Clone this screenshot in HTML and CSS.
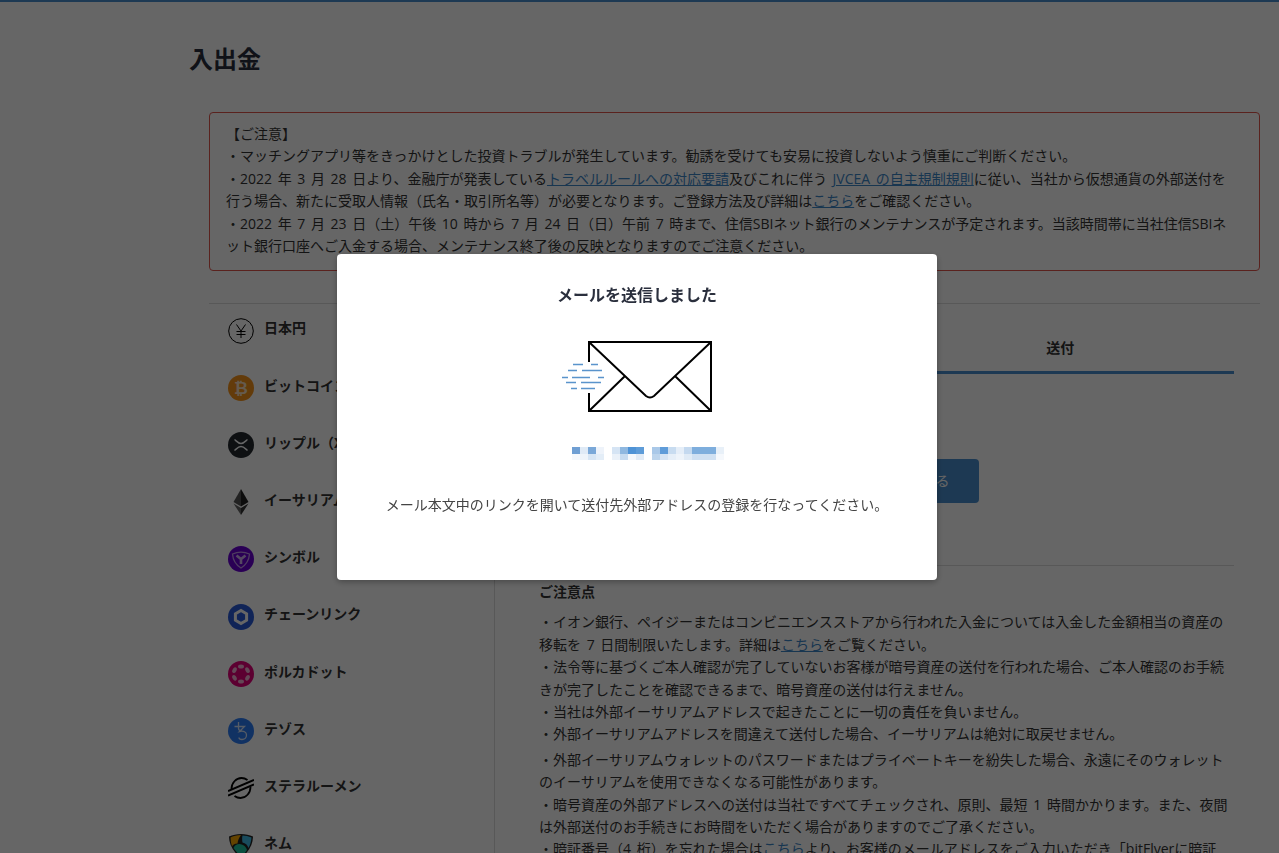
FILE: index.html
```html
<!DOCTYPE html>
<html lang="ja">
<head>
  <meta charset="utf-8">
  <title>入出金</title>
  <link rel="stylesheet" href="styles.css">
</head>
<body>
  <div class="topbar"></div>
  <main class="page">
    <h1 class="page-title">入出金</h1>

    <div class="notice">
      【ご注意】<br>
      ・マッチングアプリ等をきっかけとした投資トラブルが発生しています。勧誘を受けても安易に投資しないよう慎重にご判断ください。<br>
      ・2022 年 3 月 28 日より、金融庁が発表している<a href="#">トラベルルールへの対応要請</a>及びこれに伴う <a href="#">JVCEA の自主規制規則</a>に従い、当社から仮想通貨の外部送付を行う場合、新たに受取人情報（氏名・取引所名等）が必要となります。ご登録方法及び詳細は<a href="#">こちら</a>をご確認ください。<br>
      ・2022 年 7 月 23 日（土）午後 10 時から 7 月 24 日（日）午前 7 時まで、住信SBIネット銀行のメンテナンスが予定されます。当該時間帯に当社住信SBIネット銀行口座へご入金する場合、メンテナンス終了後の反映となりますのでご注意ください。
    </div>

    <div class="panel">
      <ul class="coins">
        <li class="coin">
          <svg class="coin-icon" viewBox="0 0 26 26"><circle cx="13" cy="13" r="12.3" fill="none" stroke="#000" stroke-width="1"/><path d="M8.5 6.5 13 13l4.5-6.5M13 13v7M8.5 13.5h9M8.5 16.5h9" fill="none" stroke="#000" stroke-width="1"/></svg>
          <span class="coin-name">日本円</span>
        </li>
        <li class="coin">
          <svg class="coin-icon" viewBox="0 0 26 26"><circle cx="13" cy="13" r="13" fill="#f7931a"/><text x="13" y="18.5" text-anchor="middle" class="coin-glyph">₿</text></svg>
          <span class="coin-name">ビットコイン</span>
        </li>
        <li class="coin">
          <svg class="coin-icon" viewBox="0 0 26 26"><circle cx="13" cy="13" r="13" fill="#23292f"/><path d="M6.500 7.500c2 1.500 3.500 4 6.500 4s4.500-2.500 6.500-4M6.500 18.500c2-1.500 3.500-4 6.500-4s4.500 2.500 6.500 4" fill="none" stroke="#fff" stroke-width="1.400"/></svg>
          <span class="coin-name">リップル（XRP）</span>
        </li>
        <li class="coin">
          <svg class="coin-icon" viewBox="0 0 26 26"><path d="M13 0 5.500 13 13 17.500z" fill="#555"/><path d="M13 0l7.500 13L13 17.500z" fill="#222"/><path d="M5.500 14.500 13 26v-7z" fill="#666"/><path d="M20.500 14.500 13 26v-7z" fill="#333"/></svg>
          <span class="coin-name">イーサリアム</span>
        </li>
        <li class="coin">
          <svg class="coin-icon" viewBox="0 0 26 26"><circle cx="13" cy="13" r="13" fill="#6a00d4"/><path d="M4.500 8c5.500-2.500 11.500-2.500 17 0-.5 6.500-3.500 11-8.500 14C8 19 5 14.500 4.500 8z" fill="none" stroke="#fff" stroke-width="1.300" opacity=".6"/><path d="M8.500 9.500 13 13l4.500-3.500M13 13v5" fill="none" stroke="#fff" stroke-width="2.600" opacity=".7"/></svg>
          <span class="coin-name">シンボル</span>
        </li>
        <li class="coin">
          <svg class="coin-icon" viewBox="0 0 26 26"><circle cx="13" cy="13" r="13" fill="#2a5ada"/><path d="M13 6.500l5.600 3.250v6.500L13 19.500l-5.600-3.250v-6.500z" fill="none" stroke="#fff" stroke-width="3"/></svg>
          <span class="coin-name">チェーンリンク</span>
        </li>
        <li class="coin">
          <svg class="coin-icon" viewBox="0 0 26 26"><circle cx="13" cy="13" r="13" fill="#e6007a"/><g fill="#fff" opacity=".7"><ellipse cx="13" cy="5.500" rx="3" ry="2"/><ellipse cx="13" cy="20.500" rx="3" ry="2"/><ellipse cx="6.500" cy="9.200" rx="3" ry="2" transform="rotate(-60 6.500 9.200)"/><ellipse cx="19.500" cy="9.200" rx="3" ry="2" transform="rotate(60 19.500 9.200)"/><ellipse cx="6.500" cy="16.800" rx="3" ry="2" transform="rotate(60 6.500 16.800)"/><ellipse cx="19.500" cy="16.800" rx="3" ry="2" transform="rotate(-60 19.500 16.800)"/></g></svg>
          <span class="coin-name">ポルカドット</span>
        </li>
        <li class="coin">
          <svg class="coin-icon" viewBox="0 0 26 26"><circle cx="13" cy="13" r="13" fill="#2c7df7"/><path d="M10.500 4v6c0 1.500.5 2.500 2 2.500M6.500 8.500h10l-5 5c4-1 7 .5 7 3.500 0 2.700-2 4.500-4.500 4.500-1.700 0-3-.8-3-2" fill="none" stroke="#fff" stroke-width="1.300" opacity=".8"/></svg>
          <span class="coin-name">テゾス</span>
        </li>
        <li class="coin">
          <svg class="coin-icon" viewBox="0 0 26 26"><path d="M0 16 26 5M0 20.500 26 9.500" fill="none" stroke="#000" stroke-width="2"/><path d="M3.500 14c0-6 4.500-11 10-11 2.200 0 4.200.7 6 2M22.500 12c0 6-4.500 11-10 11-2.200 0-4.200-.7-6-2" fill="none" stroke="#000" stroke-width="1.800"/></svg>
          <span class="coin-name">ステラルーメン</span>
        </li>
        <li class="coin">
          <svg class="coin-icon" viewBox="0 0 26 26"><path d="M1 4.500C8 1 18 1 25 4.500 25 12 21 20 13 26 5 20 1 12 1 4.500z" fill="#222"/><path d="M2.500 5.500C5 4 9 3 13 3c-2 3-3 5-3.500 8.500-3 0-5 1.500-5.500 3-1-3-1.500-6-1.500-9z" fill="#f7a800"/><path d="M14.500 3.500c3 0 6 .8 9 2-.3 4-1.500 7.500-3 10.500-1-3-3-5-6-5.500-.5-2.500-.5-5 0-7z" fill="#41bfe8"/><path d="M5.500 16c1-2.500 3-4 6-4 3 .2 6 1.800 7.500 6-1.500 2.500-3.500 4.500-6 6-3-2-5.500-5-7.500-8z" fill="#20c5a0"/></svg>
          <span class="coin-name">ネム</span>
        </li>
      </ul>

      <section class="detail">
        <div class="tabs">
          <div class="tab">預入</div>
          <div class="tab tab-active">送付</div>
        </div>
        <div class="action">
          <button class="btn">アドレスを追加する</button>
        </div>
        <hr class="rule">
        <h2 class="detail-title">ご注意点</h2>
        <p class="detail-text">
          ・イオン銀行、ペイジーまたはコンビニエンスストアから行われた入金については入金した金額相当の資産の移転を 7 日間制限いたします。詳細は<a href="#">こちら</a>をご覧ください。<br>
          ・法令等に基づくご本人確認が完了していないお客様が暗号資産の送付を行われた場合、ご本人確認のお手続きが完了したことを確認できるまで、暗号資産の送付は行えません。<br>
          ・当社は外部イーサリアムアドレスで起きたことに一切の責任を負いません。<br>
          ・外部イーサリアムアドレスを間違えて送付した場合、イーサリアムは絶対に取戻せません。
        </p>
        <p class="detail-text">
          ・外部イーサリアムウォレットのパスワードまたはプライベートキーを紛失した場合、永遠にそのウォレットのイーサリアムを使用できなくなる可能性があります。<br>
          ・暗号資産の外部アドレスへの送付は当社ですべてチェックされ、原則、最短 1 時間かかります。また、夜間は外部送付のお手続きにお時間をいただく場合がありますのでご了承ください。<br>
          ・暗証番号（4 桁）を忘れた場合は<a href="#">こちら</a>より、お客様のメールアドレスをご入力いただき「bitFlyerに暗証<br>番号の再設定を依頼する」を押してください。
        </p>
      </section>
    </div>
  </main>

  <div class="overlay"></div>

  <div class="modal">
    <h3 class="modal-title">メールを送信しました</h3>
    <svg class="mail-art" width="150" height="73" viewBox="562 340 150 73">
      <path d="M589 362V342H711V411H589V393" fill="none" stroke="#000" stroke-width="2"/>
      <path d="M589 342 646 396q4 3 8 0L711 342M625 376 589 411M675 376 711 411" fill="none" stroke="#000" stroke-width="2"/>
      <path d="M573 364.500h10M591 364.500h7M568 370.500h9M582 370.500h20M562 377.500h6M572 377.500h18M598 377.500h6M566 382.500h10M581 382.500h20M571 388.500h6M581 388.500h14" fill="none" stroke="#5a94cc" stroke-width="1.300"/>
    </svg>
    <svg class="mail-address" width="152" height="13" viewBox="0 0 152 13">
      <g shape-rendering="crispEdges">
        <rect x="0" width="8" height="6.500" fill="#6f9fd3"/><rect x="8" width="8" height="6.500" fill="#dfeaf6"/><rect x="16" width="8" height="6.500" fill="#7aa8d8"/><rect x="24" width="8" height="6.500" fill="#eef3fa"/>
        <rect x="40" width="8" height="6.500" fill="#d5e4f4"/><rect x="48" width="8" height="6.500" fill="#8fb8e0"/><rect x="56" width="8" height="6.500" fill="#4f93d6"/><rect x="64" width="8" height="6.500" fill="#5e9cd8"/>
        <rect x="80" width="8" height="6.500" fill="#a9c8e8"/><rect x="88" width="8" height="6.500" fill="#5f9cd9"/><rect x="96" width="8" height="6.500" fill="#c8dcf0"/><rect x="104" width="8" height="6.500" fill="#e5eef8"/><rect x="112" width="8" height="6.500" fill="#c4d9ef"/><rect x="120" width="24" height="6.500" fill="#7eaedd"/><rect x="144" width="8" height="6.500" fill="#e8f0f8"/>
        <rect x="0" y="6.500" width="8" height="6.500" fill="#f5f8fc"/><rect x="8" y="6.500" width="8" height="6.500" fill="#eef4fa"/><rect x="16" y="6.500" width="8" height="6.500" fill="#d6e5f4"/><rect x="24" y="6.500" width="8" height="6.500" fill="#e3edf7"/>
        <rect x="40" y="6.500" width="8" height="6.500" fill="#eaf1f9"/><rect x="48" y="6.500" width="8" height="6.500" fill="#c6dbf0"/><rect x="56" y="6.500" width="8" height="6.500" fill="#f4f8fc"/><rect x="64" y="6.500" width="8" height="6.500" fill="#e1ebf6"/>
        <rect x="80" y="6.500" width="8" height="6.500" fill="#bcd4ec"/><rect x="88" y="6.500" width="8" height="6.500" fill="#d5e4f4"/><rect x="96" y="6.500" width="8" height="6.500" fill="#e6eff8"/><rect x="104" y="6.500" width="8" height="6.500" fill="#eef4fa"/><rect x="112" y="6.500" width="8" height="6.500" fill="#e0ebf6"/><rect x="120" y="6.500" width="24" height="6.500" fill="#cfe0f2"/><rect x="144" y="6.500" width="8" height="6.500" fill="#f5f8fc"/>
      </g>
    </svg>
    <p class="modal-text">メール本文中のリンクを開いて送付先外部アドレスの登録を行なってください。</p>
  </div>
</body>
</html>
```

FILE: styles.css
```css
html, body {
  height: 100%;
}
body {
  margin: 0;
  height: 853px;
  overflow: hidden;
  background-color: #fff;
  color: #333;
  font-family: "Open Sans", "Noto Sans CJK JP", sans-serif;
  font-size: 14px;
  line-height: 22.4px;
  word-spacing: 2px;
}
a {
  color: #3d87c9;
  text-decoration: underline;
}
.topbar {
  height: 2px;
  background-color: #4a90d0;
}
.page {
  padding-left: 190px;
}
.page-title {
  margin: 0 0 0 -1px;
  padding-top: 38px;
  font-size: 24px;
  line-height: 38px;
  font-weight: 700;
  color: #2a2f3d;
}
.notice {
  box-sizing: border-box;
  width: 1051px;
  height: 159px;
  margin: 34px 0 0 19px;
  padding: 10px 26px 0 16px;
  border: 1px solid #e0554d;
  border-radius: 4px;
}
.panel {
  display: flex;
  width: 1051px;
  margin: 32px 0 0 19px;
  border-top: 1px solid #ddd;
}
.coins {
  flex: none;
  width: 286px;
  margin: -1px 0 0;
  padding: 0 0 0 19px;
  box-sizing: border-box;
  list-style: none;
  border-right: 1px solid #ddd;
}
.coin {
  display: flex;
  align-items: center;
  gap: 10px;
  height: 57.2px;
  white-space: nowrap;
}
.coin-icon {
  flex: none;
  width: 26px;
  height: 26px;
  margin-bottom: 2px;
}
.coin-glyph {
  font-family: "DejaVu Sans", sans-serif;
  font-size: 17px;
  font-weight: 700;
  fill: #fff;
  opacity: .75;
}
.coin-name {
  margin-bottom: 6px;
  font-weight: 700;
}
.detail {
  flex: 1;
  padding: 21px 26px 0 44px;
}
.tabs {
  display: flex;
}
.tab {
  flex: 1;
  height: 46px;
  text-align: center;
  font-weight: 700;
  line-height: 46px;
  border-bottom: 3px solid transparent;
}
.tab-active {
  border-bottom-color: #4a90d0;
}
.action {
  display: flex;
  justify-content: center;
  margin-top: 85px;
}
.btn {
  width: 185px;
  height: 44px;
  border: none;
  border-radius: 4px;
  background-color: #4a90d0;
  color: #fff;
  font: inherit;
}
.rule {
  margin: 62px 0 15px;
  border: none;
  border-top: 1px solid #ddd;
}
.detail-title {
  margin: 0 0 8px;
  font-size: 14px;
  font-weight: 700;
}
.detail-text {
  margin: 0 0 3px;
}
.overlay {
  position: fixed;
  inset: 0;
  background-color: rgba(0, 0, 0, .6);
}
.modal {
  position: fixed;
  left: 337px;
  top: 254px;
  display: flex;
  flex-direction: column;
  align-items: center;
  box-sizing: border-box;
  width: 600px;
  height: 326px;
  padding-top: 28px;
  background-color: #fff;
  border-radius: 4px;
  box-shadow: 0 2px 6px rgba(0, 0, 0, .3);
}
.modal-title {
  margin: 0;
  font-size: 16px;
  line-height: 26px;
  font-weight: 700;
  color: #2a2f3d;
}
.mail-art {
  margin-top: 32px;
}
.mail-address {
  margin: 34px 0 0 21px;
  filter: blur(.7px);
}
.modal-text {
  margin: 34px 0 0;
  color: #444;
}
```
